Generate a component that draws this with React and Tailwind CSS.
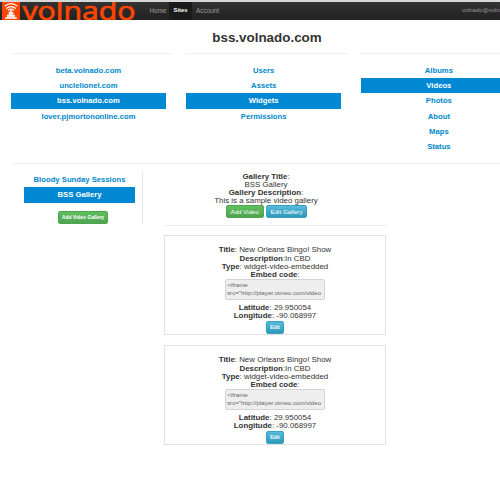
const ACTIVE = "bg-[#0088d2] text-white";
const LINK = "text-[#0088cc]";

function NavList({ items, active, className = "" }) {
  return (
    <ul className={`text-center text-[7.7px] font-bold ${className}`}>
      {items.map((item) => (
        <li key={item} className={`h-[15.4px] leading-[15.4px] ${item === active ? ACTIVE : LINK}`}>
          {item}
        </li>
      ))}
    </ul>
  );
}

function Column({ items, active }) {
  return (
    <div className="h-[110px] w-[162px] shrink-0 border-t border-[#f0f0f0] pt-[8.5px]">
      <NavList items={items} active={active} className="w-[155px]" />
    </div>
  );
}

function Button({ color, className, children }) {
  const tone =
    color === "green"
      ? "from-[#5fbf5f] to-[#51a351] border-[#4ca64c]"
      : "from-[#56bbdc] to-[#2f98b9] border-[#3aa2c2]";
  return (
    <button className={`block shrink-0 rounded-[2px] border bg-linear-to-b text-center whitespace-nowrap text-white ${tone} ${className}`}>
      {children}
    </button>
  );
}

function VideoCard() {
  return (
    <article className="mb-[10px] flex h-[100px] w-[222px] flex-col items-center border border-[#e2e2e2] pt-[10.3px] text-center">
      <p><b>Title</b>: New Orleans Bingo! Show</p>
      <p><b>Description</b>:In CBD</p>
      <p><b>Type</b>: widget-video-embedded</p>
      <p><b>Embed code</b>:</p>
      <div className="mb-[4px] h-[21px] w-[100px] shrink-0 overflow-hidden rounded-[2px] border border-[#d4d4d4] bg-[#eeeeee] px-[1px] pt-[0.6px] text-left text-[6.2px] leading-[8.2px] text-[#666]">
        &lt;iframe
        <br />
        src="http://player.vimeo.com/video
      </div>
      <p><b>Latitude</b>: 29.950054</p>
      <p><b>Longitude</b>: -90.068997</p>
      <Button color="blue" className="h-[13px] w-[18px] text-[5px] leading-[11px] font-bold">Edit</Button>
    </article>
  );
}

function Logo() {
  return (
    <svg viewBox="0 0 138 18" className="h-[18px] w-[138px]">
      <rect x="2" y="0" width="18" height="18" fill="#ff4500" />
      <g fill="none" stroke="#fff" strokeWidth="1.3">
        <path d="M4.7 4.2 Q11 -.8 17.3 4.2" />
        <path d="M6.2 6.4 Q11 2.7 15.8 6.4" />
        <path d="M8 8.3 Q11 6 14 8.3" />
        <path d="M8.5 11.2 H13.5 M7 13.5 H15 M5 16.2 H17" />
      </g>
      <path d="M10 8 H12 L13.5 13 L16.5 16 H5.5 L8.5 13 Z" fill="#fff" fillOpacity=".75" />
      <text x="22.5" y="17.5" fill="#ff4500" stroke="#ff4500" strokeWidth=".7" fontFamily="'Open Sans', sans-serif" fontSize="26" textLength="113" lengthAdjust="spacingAndGlyphs">
        volnado
      </text>
    </svg>
  );
}

export default function App() {
  return (
    <div className="h-[500px] w-[500px] overflow-hidden bg-white font-['Liberation_Sans',Arial,sans-serif] text-[7.9px] leading-[8.2px] text-[#333]">
      <header className="flex h-[20px] border-t-2 border-[#d5dad9] bg-linear-to-b from-[#333] to-[#222] text-[6.4px] leading-[17px] text-[#999]">
        <Logo />
        <nav className="ml-[5px] flex">
          <a className="w-[26px] pl-[6.5px]">Home</a>
          <a className="w-[23px] bg-[#1b1b1b] text-center text-[5.8px] font-bold text-white">Sites</a>
          <a className="pl-[4px]">Account</a>
        </nav>
        <span className="ml-auto w-[38px] whitespace-nowrap text-[5.9px]">volnado@volnado.com</span>
      </header>

      <h1 className="h-[33px] w-[534px] pt-[10px] text-center text-[13.4px] leading-[16px] font-bold">bss.volnado.com</h1>

      <section className="ml-[11px] flex w-[540px] gap-[13.2px]">
        <Column active="bss.volnado.com" items={["beta.volnado.com", "unclelionel.com", "bss.volnado.com", "lover.pjmortononline.com"]} />
        <Column active="Widgets" items={["Users", "Assets", "Widgets", "Permissions"]} />
        <Column active="Videos" items={["Albums", "Videos", "Photos", "About", "Maps", "Status"]} />
      </section>

      <section className="ml-[11px] flex border-t border-[#f0f0f0] pt-[8px]">
        <aside className="flex h-[52px] w-[132px] flex-col border-r border-[#e4e4e4] pl-[13px]">
          <NavList active="BSS Gallery" items={["Bloody Sunday Sessions", "BSS Gallery"]} className="w-[111px]" />
          <Button color="green" className="mt-[8px] ml-[34px] h-[13px] w-[50px] text-[4.9px] leading-[11px] font-bold">Add Video Gallery</Button>
        </aside>
        <main className="ml-[21px] w-[222px] pt-[0.5px]">
          <div className="mb-[9px] h-[53.5px] border-b border-[#ececec] text-center">
            <div className="w-[204px]">
              <p><b>Gallery Title</b>:</p>
              <p>BSS Gallery</p>
              <p><b>Gallery Description</b>:</p>
              <p>This is a sample video gallery</p>
            </div>
            <div className="ml-[62px] flex gap-[2.5px]">
              <Button color="green" className="h-[13px] w-[37.5px] text-[6.2px] leading-[11px]">Add Video</Button>
              <Button color="blue" className="h-[13px] w-[41px] text-[6.2px] leading-[11px]">Edit Gallery</Button>
            </div>
          </div>
          <VideoCard />
          <VideoCard />
        </main>
      </section>
    </div>
  );
}
